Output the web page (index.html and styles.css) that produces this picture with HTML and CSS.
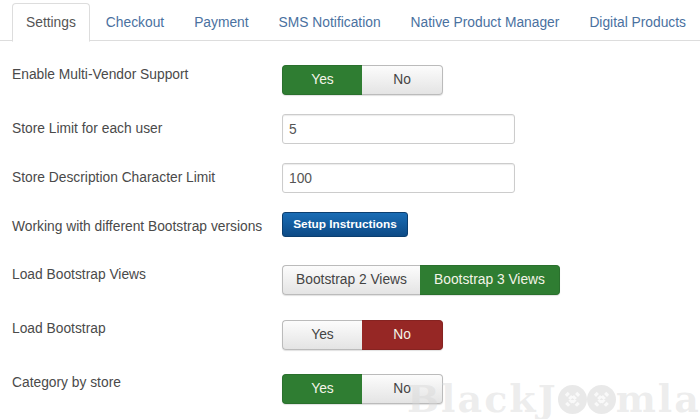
FILE: index.html
```html
<!DOCTYPE html>
<html lang="en">
<head>
    <meta charset="UTF-8">
    <title>Settings</title>
    <link rel="stylesheet" href="styles.css">
</head>
<body>
    <ul class="tabs">
        <li class="tab active">Settings</li>
        <li class="tab">Checkout</li>
        <li class="tab">Payment</li>
        <li class="tab">SMS Notification</li>
        <li class="tab">Native Product Manager</li>
        <li class="tab">Digital Products</li>
    </ul>

    <div class="form">
        <div class="row row-1">
            <div class="label">Enable Multi-Vendor Support</div>
            <div class="toggle">
                <span class="opt green">Yes</span>
                <span class="opt">No</span>
            </div>
        </div>
        <div class="row row-2 low">
            <div class="label">Store Limit for each user</div>
            <input class="field" type="text" value="5">
        </div>
        <div class="row row-3 low">
            <div class="label">Store Description Character Limit</div>
            <input class="field" type="text" value="100">
        </div>
        <div class="row row-4 low">
            <div class="label">Working with different Bootstrap versions</div>
            <button class="btn-setup" type="button">Setup Instructions</button>
        </div>
        <div class="row row-5">
            <div class="label">Load Bootstrap Views</div>
            <div class="toggle wide">
                <span class="opt">Bootstrap 2 Views</span>
                <span class="opt green">Bootstrap 3 Views</span>
            </div>
        </div>
        <div class="row row-6 high">
            <div class="label">Load Bootstrap</div>
            <div class="toggle">
                <span class="opt">Yes</span>
                <span class="opt red">No</span>
            </div>
        </div>
        <div class="row row-7 high">
            <div class="label">Category by store</div>
            <div class="toggle">
                <span class="opt green">Yes</span>
                <span class="opt">No</span>
            </div>
        </div>
    </div>

    <!-- watermark sits over the last row -->
    <div class="watermark">
        <div>BlackJ</div>
        <svg class="mark" viewBox="0 0 28 28"><circle cx="14" cy="14" r="14" fill="#e6e6e6"/><path d="M8 8l12 12M20 8L8 20" stroke="#f8f8f8" stroke-width="4" stroke-dasharray="3 1.5"/></svg>
        <svg class="mark" viewBox="0 0 28 28"><circle cx="14" cy="14" r="14" fill="#e6e6e6"/><path d="M8 8l12 12M20 8L8 20" stroke="#f8f8f8" stroke-width="4" stroke-dasharray="3 1.5"/></svg>
        <div>mla</div>
    </div>
</body>
</html>
```

FILE: styles.css
```css
body {
    margin: 0;
    height: 419px;
    overflow: hidden;
    position: relative;
    background: #fff;
    font-family: "Liberation Sans", Arial, sans-serif;
    font-size: 13.8px;
    color: #555;
}

/* tabs */
.tabs {
    display: flex;
    list-style: none;
    margin: 0;
    padding: 3px 0 0 12px;
    height: 37px;
    border-bottom: 1px solid #ddd;
}

.tab {
    margin-right: 2px;
    padding: 0 13px;
    height: 37px;
    line-height: 37px;
    color: #4a719f;
    white-space: nowrap;
    border: 1px solid transparent;
    border-radius: 4px 4px 0 0;
}

.tab.active {
    color: #555;
    background: #fff;
    border-color: #ddd;
    border-bottom-color: #fff;
}

/* form rows */
.form {
    padding-left: 12px;
}

.row {
    display: flex;
    align-items: flex-start;
}

.label {
    width: 270px;
    flex: none;
    line-height: 20px;
    color: #4a4a4a;
}

.low .label {
    padding-top: 5px;
}

.high .label {
    line-height: 18px;
}

.row-1 { margin-top: 24px; }
.row-2 { margin-top: 19px; }
.row-3 { margin-top: 19px; }
.row-4 { margin-top: 19px; }
.row-5 { margin-top: 28px; }
.row-6 { margin-top: 25px; }
.row-7 { margin-top: 24px; }

/* yes/no switch */
.toggle {
    display: flex;
    width: 161px;
    height: 30px;
    border-radius: 4px;
    box-shadow: 0 1px 1px rgba(0, 0, 0, 0.12);
}

.toggle.wide {
    width: 278px;
}

.opt {
    flex: 1;
    box-sizing: border-box;
    height: 30px;
    border: 1px solid #bbb;
    text-align: center;
    line-height: 27px;
    color: #444;
    background: linear-gradient(#fcfcfc, #e4e4e4);
    white-space: nowrap;
}

.opt:first-child {
    flex: none;
    width: 80px;
    border-right: 0;
    border-radius: 4px 0 0 4px;
}

.toggle.wide .opt:first-child {
    width: 138px;
}

.opt:last-child {
    border-left: 0;
    border-radius: 0 4px 4px 0;
}

.opt.green,
.opt.red {
    color: #f4f4e8;
}

.opt.green {
    background: #2f7d32;
    border-color: #2a702d;
}

.opt.red {
    background: #962725;
    border-color: #862321;
}

.field {
    width: 233px;
    height: 30px;
    box-sizing: border-box;
    padding: 4px 6px;
    border: 1px solid #ccc;
    border-radius: 3px;
    box-shadow: inset 0 1px 1px rgba(0, 0, 0, 0.08);
    font: inherit;
    color: #555;
}

.btn-setup {
    width: 126px;
    height: 25px;
    padding: 0 0 2px;
    border: 1px solid #0b3e6f;
    border-radius: 3px;
    background: linear-gradient(#1a6db5, #0d4a86);
    color: #fff;
    font: inherit;
    font-size: 11.8px;
    font-weight: bold;
}

.watermark {
    position: absolute;
    left: 407px;
    top: 380px;
    display: flex;
    align-items: center;
    font-family: "DejaVu Serif", serif;
    font-weight: bold;
    font-size: 38px;
    line-height: 38px;
    letter-spacing: 2px;
    color: rgba(215, 215, 215, 0.45);
}

.mark {
    width: 29px;
    height: 29px;
    opacity: 0.85;
}
```
